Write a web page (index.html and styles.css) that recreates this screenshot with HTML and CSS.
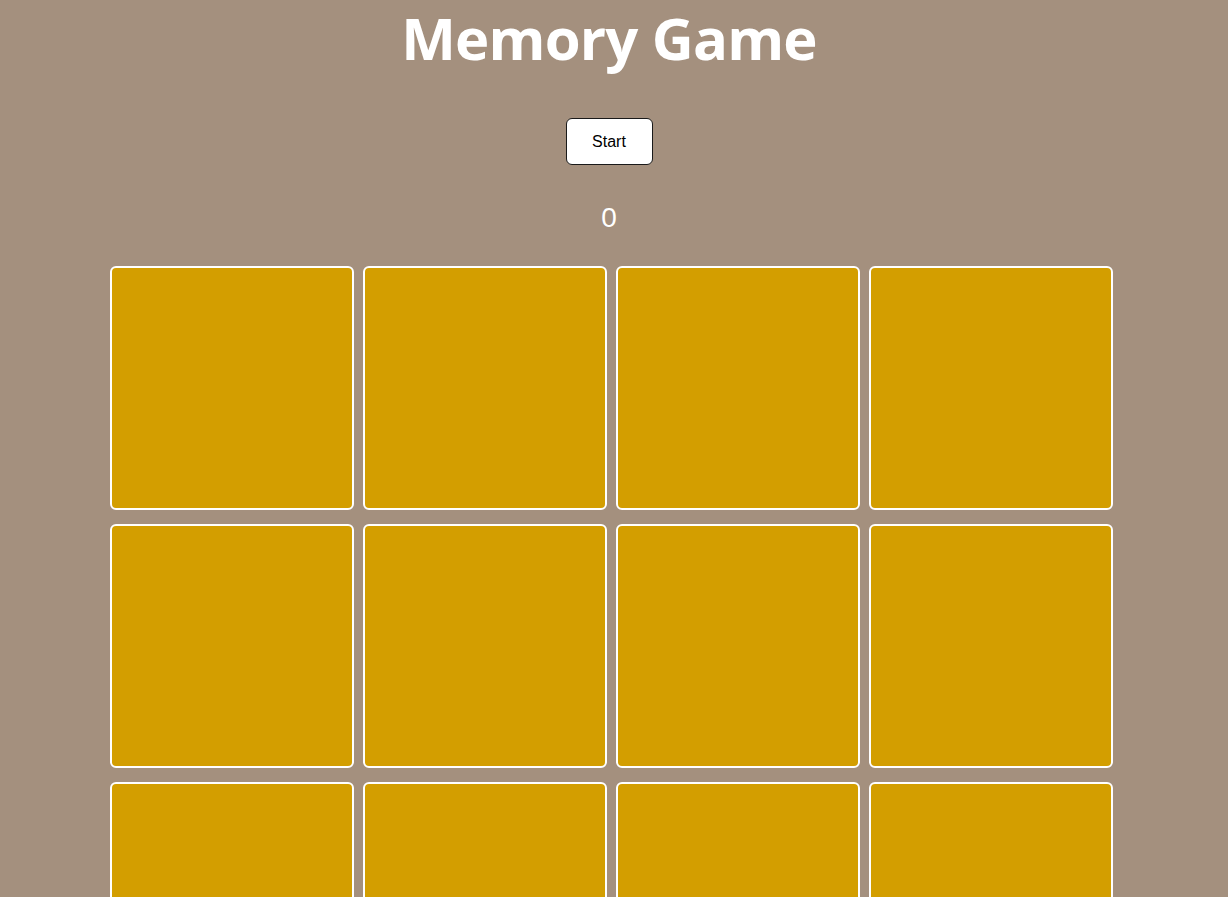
FILE: index.html
```html
<!DOCTYPE html>
<html lang="en">
<head>
<meta charset="utf-8">
<title>Memory Game</title>
<link rel="stylesheet" href="styles.css">
</head>
<body>
<div class="page">
  <h1 class="title">Memory Game</h1>
  <div class="controls">
    <button class="start-btn" type="button">Start</button>
  </div>
  <div class="score">0</div>
  <div class="board">
    <div class="card"></div>
    <div class="card"></div>
    <div class="card"></div>
    <div class="card"></div>
    <div class="card"></div>
    <div class="card"></div>
    <div class="card"></div>
    <div class="card"></div>
    <div class="card"></div>
    <div class="card"></div>
    <div class="card"></div>
    <div class="card"></div>
  </div>
</div>
</body>
</html>
```

FILE: styles.css
```css
html, body {
  margin: 0;
  padding: 0;
  background: #a4907e;
  overflow: hidden;
}

.page {
  width: 1218px;
  display: flex;
  flex-direction: column;
  align-items: center;
  font-family: "Liberation Sans", Arial, sans-serif;
}

.title {
  margin: 0;
  font-family: "Open Sans", sans-serif;
  font-weight: 700;
  font-size: 58px;
  line-height: 75px;
  color: #ffffff;
  letter-spacing: -0.8px;
}

.controls {
  margin-top: 43px;
}

.start-btn {
  width: 87px;
  height: 47px;
  background: #ffffff;
  border: 1px solid #1a1a1a;
  border-radius: 6px;
  font-family: "Liberation Sans", Arial, sans-serif;
  font-size: 16px;
  color: #000;
  padding: 0;
  display: block;
}

.score {
  margin-top: 37px;
  font-size: 28px;
  line-height: 32px;
  color: #ffffff;
}

.board {
  align-self: flex-start;
  margin-left: 110px;
  margin-top: 32px;
  display: grid;
  grid-template-columns: repeat(4, 244px);
  grid-auto-rows: 244px;
  column-gap: 9px;
  row-gap: 14px;
}

.card {
  box-sizing: border-box;
  background: #d39e00;
  border: 2px solid #ffffff;
  border-radius: 6px;
}
```
